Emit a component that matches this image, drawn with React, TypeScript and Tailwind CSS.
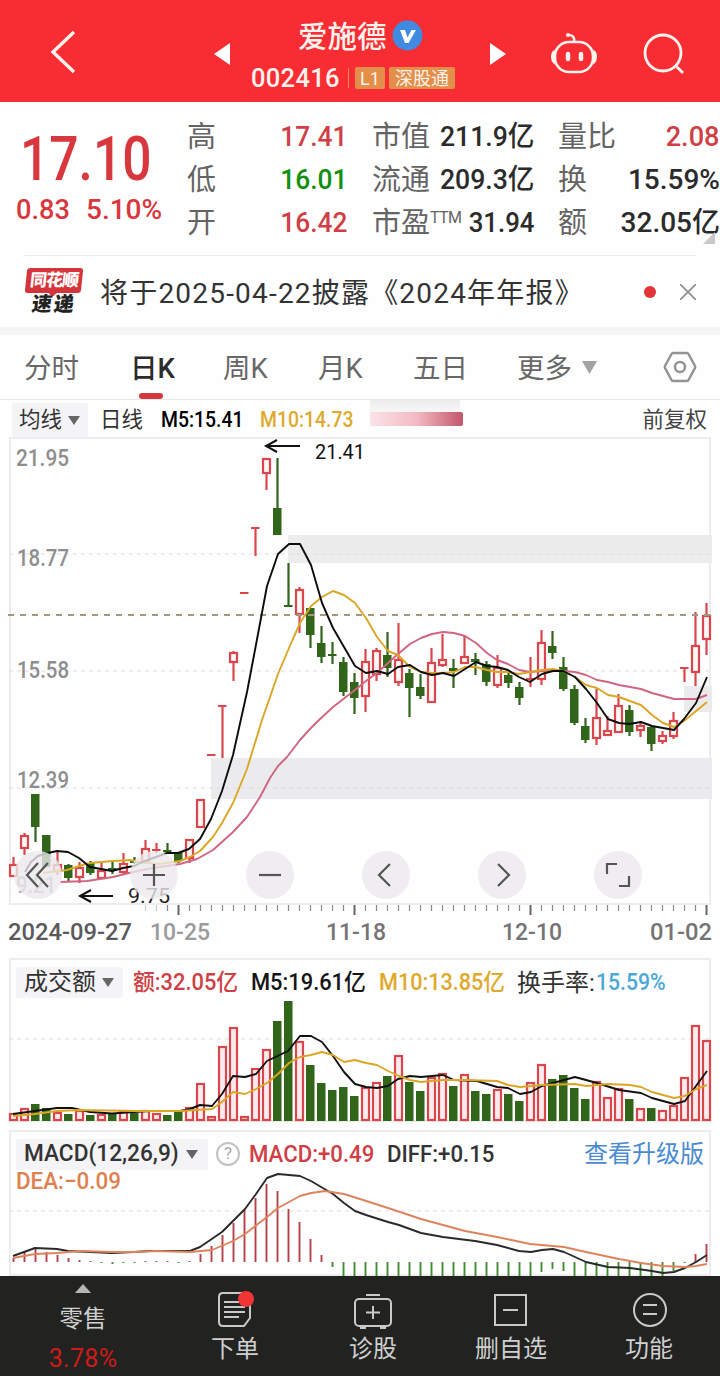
import type { ReactNode } from 'react'

const RED = '#d9474d'
const GREEN = '#30651a'

// kind, high, body top, body bottom, low
type Candle = ['r' | 'g', number, number, number, number]

const CANDLES: Candle[] = [
  ['r', 857, 864, 877, 877],
  ['r', 833, 835, 849, 855],
  ['g', 794, 794, 827, 842],
  ['g', 835, 835, 867, 867],
  ['r', 852, 864, 872, 875],
  ['g', 864, 865, 878, 881],
  ['r', 862, 867, 878, 883],
  ['g', 861, 863, 873, 875],
  ['r', 863, 870, 879, 879],
  ['g', 862, 868, 871, 874],
  ['r', 853, 863, 873, 874],
  ['g', 857, 861, 863, 864],
  ['r', 840, 848, 862, 862],
  ['r', 843, 849, 851, 853],
  ['g', 843, 850, 852, 854],
  ['g', 852, 852, 861, 863],
  ['r', 839, 839, 859, 863],
  ['r', 799, 799, 828, 828],
  ['r', 754, 754, 756, 756],
  ['r', 705, 705, 707, 758],
  ['r', 651, 652, 663, 681],
  ['r', 592, 592, 594, 594],
  ['r', 527, 527, 529, 556],
  ['r', 458, 458, 474, 490],
  ['g', 458, 508, 535, 535],
  ['g', 563, 605, 607, 607],
  ['r', 587, 589, 615, 633],
  ['g', 608, 608, 635, 648],
  ['g', 626, 643, 657, 663],
  ['g', 642, 654, 656, 664],
  ['g', 657, 662, 692, 696],
  ['g', 673, 682, 698, 714],
  ['r', 649, 661, 697, 712],
  ['r', 648, 650, 675, 681],
  ['g', 632, 655, 668, 677],
  ['r', 623, 659, 683, 686],
  ['g', 669, 673, 688, 717],
  ['g', 674, 687, 696, 699],
  ['r', 648, 662, 703, 703],
  ['r', 634, 659, 666, 667],
  ['g', 659, 668, 671, 688],
  ['r', 636, 656, 664, 664],
  ['g', 653, 659, 662, 675],
  ['g', 661, 664, 682, 686],
  ['r', 655, 667, 686, 688],
  ['g', 671, 675, 683, 688],
  ['g', 682, 687, 698, 705],
  ['r', 657, 678, 680, 687],
  ['r', 630, 642, 680, 685],
  ['g', 631, 646, 653, 659],
  ['g', 657, 667, 689, 691],
  ['g', 685, 689, 723, 725],
  ['g', 718, 726, 740, 743],
  ['r', 689, 717, 739, 745],
  ['r', 716, 730, 736, 736],
  ['r', 694, 705, 733, 733],
  ['g', 705, 710, 732, 736],
  ['r', 721, 725, 731, 737],
  ['g', 726, 727, 744, 751],
  ['r', 731, 735, 742, 744],
  ['r', 712, 720, 737, 739],
  ['r', 667, 667, 669, 682],
  ['r', 612, 645, 673, 686],
  ['r', 603, 615, 640, 655],
]

const VOLUME_TOPS = [
  1113, 1108, 1104, 1108, 1112, 1114, 1110, 1115, 1114, 1113, 1110, 1113, 1110, 1113, 1115, 1112,
  1107, 1083, 1116, 1046, 1027, 1116, 1068, 1049, 1021, 1001, 1041, 1065, 1083, 1090, 1087, 1096,
  1087, 1082, 1076, 1055, 1082, 1091, 1077, 1073, 1086, 1074, 1091, 1094, 1089, 1094, 1101, 1082,
  1064, 1079, 1075, 1088, 1099, 1081, 1097, 1088, 1099, 1108, 1108, 1110, 1105, 1077, 1025, 1040,
]

// histogram ends, measured against the zero line
const MACD_ZERO = 1262
const MACD_ENDS = [
  1258, 1252, 1249, 1252, 1255, 1258, 1260, 1261, 1263, 1264, 1263, 1263, 1261, 1261, 1261, 1263,
  1261, 1254, 1246, 1235, 1223, 1210, 1198, 1184, 1191, 1209, 1222, 1239, 1255, 1267, 1278, 1278,
  1278, 1278, 1278, 1278, 1278, 1278, 1278, 1278, 1278, 1278, 1278, 1278, 1278, 1278, 1278, 1278,
  1272, 1269, 1271, 1278, 1278, 1278, 1278, 1278, 1278, 1278, 1278, 1278, 1271, 1263, 1254, 1244,
]

const MA5 =
  '25,872 31,862 38,856 48,853 57,851 68,852 79,858 90,867 101,869 112,871 123,868 134,866 145,861 156,857 167,853 178,853 189,849 200,839 211,819 222,791 233,755 247,692 255,650 267,586 278,554 289,544 300,544 311,565 322,603 333,628 344,647 355,666 366,673 377,671 388,674 398,667 410,665 421,672 432,675 443,673 454,676 465,669 476,662 487,666 497,667 508,670 519,677 530,682 542,674 553,671 563,671 575,677 586,689 597,703 608,719 619,723 629,724 641,722 652,726 663,728 674,730 684,719 696,703 707,677'
const MA10 =
  '43,873 67,870 79,866 90,863 113,861 130,860 145,863 160,864 180,861 190,857 200,851 213,837 222,823 233,803 247,769 262,720 270,697 278,674 289,648 300,623 311,606 322,597 333,591 344,595 355,603 366,618 377,637 388,651 398,655 410,667 421,672 432,673 443,673 454,672 465,667 476,667 487,670 497,672 508,672 519,674 530,672 542,670 553,669 563,671 575,677 586,685 597,688 608,695 619,697 641,705 652,715 663,723 674,727 684,721 707,702'
const MA20 =
  '60,882 87,881 113,877 133,872 153,868 180,864 197,859 213,850 233,832 247,817 260,797 270,778 278,766 287,757 300,740 310,729 319,720 333,707 355,690 366,681 377,673 388,663 398,654 410,644 421,638 432,634 443,632 454,633 465,636 476,643 487,653 497,660 508,664 519,670 530,672 542,671 563,671 575,672 586,675 597,680 608,682 619,685 641,689 652,693 663,696 674,699 696,699 707,695'
const VOL5 =
  '13,1114 35,1111 57,1108 72,1108 90,1112 112,1113.5 134,1112 150,1111 180,1111 190,1109 200,1105 212,1106 222,1094 233,1076 245,1077 256,1074 267,1061 288,1051 300,1036 311,1036 322,1042 333,1056 344,1072 355,1084 366,1087 377,1088 388,1086 398,1079 410,1076 421,1077 443,1075 454,1080 477,1081 497,1087 508,1088 520,1094 531,1092 542,1086 553,1083 575,1077 597,1083 619,1090 641,1093 652,1098 663,1101 674,1104 685,1101 696,1086 707,1071'
const VOL10 =
  '13,1116 35,1114 57,1111 80,1110 134,1111 180,1111 212,1109 222,1102 233,1092 245,1094 256,1089 267,1083 278,1074 289,1063 300,1057 311,1055 322,1052 333,1055 344,1062 355,1060 366,1063 377,1065 388,1071 399,1076 410,1080 421,1082 443,1080 465,1080 497,1081 508,1085 520,1087 542,1085 575,1084 586,1086 608,1084 630,1085 641,1087 652,1092 663,1095 674,1098 685,1096 696,1089 707,1085'
const DIFF =
  '13,1256 35,1248 57,1249 68,1251 112,1253 134,1252 150,1251 180,1251 190,1251 200,1247 222,1232 233,1221 245,1209 256,1194 267,1178 278,1174 300,1176 311,1181 333,1194 344,1203 355,1211 366,1215 388,1222 399,1225 421,1233 443,1237 475,1241 486,1243 497,1245 519,1251 531,1252 542,1250 553,1249 564,1252 586,1262 608,1267 630,1268 652,1271 663,1273 674,1272 685,1268 696,1262 707,1255'
const DEA =
  '13,1258 35,1254 57,1253 80,1251 112,1252 134,1252 156,1251 190,1252 212,1250 233,1241 245,1234 267,1217 278,1208 289,1202 300,1196 311,1193 325,1191 344,1194 360,1199 388,1208 421,1219 465,1231 497,1237 530,1244 564,1247 586,1252 619,1259 641,1263 663,1266 685,1267 696,1266 707,1264'

const cx = (i: number) => 13.5 + i * 11

function Line({ points, color }: { points: string; color: string }) {
  return <polyline points={points} fill="none" stroke={color} strokeWidth={1.9} strokeLinejoin="round" />
}

function Grid({ y }: { y: number }) {
  return <path d={`M9 ${y}H710`} stroke="#dedde0" strokeWidth={1.2} strokeDasharray="4 4" />
}

function Label({ x, y, w, size, color, weight = 500, children }: {
  x: number
  y: number
  w: number
  size: number
  color: string
  weight?: number
  children: string
}) {
  return (
    <text x={x} y={y} textLength={w} lengthAdjust="spacingAndGlyphs" fontSize={size} fontWeight={weight} fill={color}>
      {children}
    </text>
  )
}

function Candlestick({ candle, i }: { candle: Candle; i: number }) {
  const [kind, high, top, bottom, low] = candle
  const x = cx(i)
  const color = kind === 'r' ? RED : GREEN
  const flat = bottom - top <= 3
  return (
    <g>
      {high < top && <path d={`M${x} ${high}V${top}`} stroke={color} strokeWidth={2.2} />}
      {low > bottom && <path d={`M${x} ${bottom}V${low}`} stroke={color} strokeWidth={2.2} />}
      {kind === 'r' && !flat ? (
        <rect x={x - 3.5} y={top + 1} width={7} height={bottom - top - 2} fill="#fff6f6" stroke={color} strokeWidth={2.2} />
      ) : (
        <rect x={x - 4.5} y={top} width={8.5} height={bottom - top} fill={color} />
      )}
    </g>
  )
}

function PriceChart() {
  return (
    <svg width="702" height="521" viewBox="9 437 702 521" className="relative block overflow-visible font-['Roboto',sans-serif]">
      <rect x={288} y={535} width={424} height={28} fill="#ececec" />
      <rect x={211} y={758} width={501} height={41} fill="#ebeaec" />
      <rect x={684} y={686} width={28} height={26} fill="#ebebee" />
      <Grid y={554} />
      <Grid y={671} />
      <Grid y={788} />
      <Label x={16} y={466} w={53} size={24} color="#8e8e8e">21.95</Label>
      <Label x={17} y={566} w={52} size={24} color="#8e8e8e">18.77</Label>
      <Label x={17} y={678} w={52} size={24} color="#8e8e8e">15.58</Label>
      <Label x={17} y={788} w={52} size={24} color="#8e8e8e">12.39</Label>
      <Label x={16} y={893} w={40} size={24} color="#a5a5a5">9.21</Label>
      {CANDLES.map((candle, i) => (
        <Candlestick key={i} candle={candle} i={i} />
      ))}
      <path d="M8 615H711" stroke="#a5977c" strokeWidth={1.8} strokeDasharray="6 6" />
      <Line points={MA20} color="#cf6580" />
      <Line points={MA10} color="#dba624" />
      <Line points={MA5} color="#0c0c0c" />

      <path d="M300 446H267M277 440l-11 6 11 6" fill="none" stroke="#111" strokeWidth={2} />
      <Label x={315} y={459} w={50} size={20} color="#111" weight={400}>21.41</Label>
      <path d="M113 896H80M91 890l-11 6 11 6" fill="none" stroke="#111" strokeWidth={2} />
      <Label x={128} y={903} w={42} size={20} color="#222" weight={400}>9.75</Label>

      {/* one tick per day, a longer one on the labelled days */}
      {CANDLES.map((_, i) =>
        i < 12 ? null : (
          <path
            key={i}
            d={i % 16 === 15 ? `M${cx(i)} 905v10` : `M${cx(i)} 905v6`}
            stroke={i < 14 ? '#cccccc' : i % 16 === 15 ? '#666666' : '#8a8a8a'}
            strokeWidth={i % 16 === 15 ? 2 : 1.2}
          />
        ),
      )}
      <Label x={8} y={940} w={124} size={23} color="#5a5a5c">2024-09-27</Label>
      <Label x={150} y={940} w={60} size={23} color="#9a9a9c">10-25</Label>
      <Label x={326} y={940} w={60} size={23} color="#747476">11-18</Label>
      <Label x={502} y={940} w={60} size={23} color="#747476">12-10</Label>
      <Label x={650} y={940} w={62} size={23} color="#747476">01-02</Label>
    </svg>
  )
}

const CONTROLS = [
  'M33 12 22 24l11 12M43 12 32 24l11 12',
  'M24 13v22M13 24h22',
  'M13 24h22',
  'M28 13 17 24l11 11',
  'M20 13l11 11-11 11',
  'M23 13H13v10M25 35h10V25',
]

function ChartControls() {
  return (
    <div className="absolute top-[414px] left-[5px] flex gap-[68px]">
      {CONTROLS.map((d, i) => (
        <button key={d} className="size-12 rounded-full bg-[#ebe9ec]/80">
          <svg viewBox={i === 0 ? '9 0 48 48' : '0 0 48 48'} className="size-12" fill="none" stroke="#555" strokeWidth={2.2}>
            <path d={d} />
          </svg>
        </button>
      ))}
    </div>
  )
}

function Caret() {
  return (
    <svg width="12" height="9" viewBox="0 0 12 9">
      <path d="M0 0h12L6 9z" fill="#666" />
    </svg>
  )
}

// digits set in a narrower cut than the text around them
function Num({ className = '', children }: { className?: string; children: ReactNode }) {
  return <span className={`inline-block whitespace-nowrap font-medium ${className}`}>{children}</span>
}

function Header() {
  return (
    <header className="flex h-[102px] items-center bg-[#f72d33] text-[#fff3ee]">
      <svg width="28" height="44" viewBox="0 0 28 44" className="mt-[2px] ml-[49px]" fill="none" stroke="currentColor" strokeWidth={3.4}>
        <path d="M25 2 4 22l21 20" />
      </svg>
      <svg width="16" height="24" viewBox="0 0 16 24" className="mt-[6px] ml-[137px]" fill="#fff">
        <path d="M16 1v22L0 12z" />
      </svg>
      <div className="ml-[21px] flex w-[206px] flex-col pt-[10px]">
        <div className="mt-1 flex h-[40px] items-center pb-[4px] pl-[47px] text-[29.500px] font-medium">
          爱施德
          <svg width="31" height="31" viewBox="0 0 31 31" className="mt-[-3px] ml-[5px]">
            <circle cx="15.5" cy="15.5" r="15" fill="#418ae2" />
            <path d="M8 10h5l2.500 7.500 4-7.500h4.500l-7.500 13h-3.500z" fill="#fff" />
          </svg>
        </div>
        <div className="flex h-[38px] items-center">
          <Num className="w-[91px] text-[25.500px] tracking-[.3px]">002416</Num>
          <i className="ml-[6px] h-[20px] w-px bg-[#e99050]" />
          <span className="ml-[6px] flex h-[22px] w-[30px] items-center justify-center rounded-[2px] bg-[#e38e49] text-[18px]">L1</span>
          <span className="ml-1 flex h-[22px] w-[66px] items-center justify-center rounded-[2px] bg-[#e38e49] text-[18px] whitespace-nowrap">深股通</span>
        </div>
      </div>
      <svg width="16" height="24" viewBox="0 0 16 24" className="mt-[6px] ml-[33px]" fill="#fff">
        <path d="M0 1v22l16-11z" />
      </svg>
      <svg width="48" height="44" viewBox="0 0 48 44" className="mt-[4px] ml-[44px]" fill="none" stroke="currentColor" strokeWidth={2.6}>
        <rect x="5" y="11" width="38" height="30" rx="14" />
        <path d="M24 11c1-4-1-7-5-7" />
        <circle cx="18" cy="4" r="2" fill="currentColor" stroke="none" />
        <path d="M4 20c-3 2-3 9 0 12zM44 20c3 2 3 9 0 12z" fill="currentColor" strokeWidth={1.500} />
        <path d="M18 23v5M31 23v5" strokeWidth={4.500} strokeLinecap="round" />
      </svg>
      <svg width="44" height="44" viewBox="0 0 44 44" className="mt-[4px] ml-[44px]" fill="none" stroke="currentColor" strokeWidth={2.8}>
        <circle cx="21" cy="22" r="18" />
        <path d="M33 34l8 8" />
      </svg>
    </header>
  )
}

function Quote() {
  return (
    <section className="relative flex h-[153px] text-[28px] text-[#646464]">
      <div className="w-[187px] text-[#d8383d]">
        <Num className="mt-[20px] ml-[20px] origin-left scale-x-[.845] text-[61px] leading-[74px]">17.10</Num>
        <div className="-mt-[1px] flex leading-[30px]">
          <Num className="ml-[16px] w-[70px] origin-left scale-x-[.97] text-[28px]">0.83</Num>
          <Num className="origin-left scale-x-[1] text-[28px]">5.10%</Num>
        </div>
      </div>
      <div className="mt-[13px] w-[160px] leading-[43px]">
        <QuoteRow label="高"><Num className="origin-right scale-x-[.94] text-[#cf3f45]">17.41</Num></QuoteRow>
        <QuoteRow label="低"><Num className="origin-right scale-x-[.94] text-[#11900f]">16.01</Num></QuoteRow>
        <QuoteRow label="开"><Num className="origin-right scale-x-[.94] text-[#cf3f45]">16.42</Num></QuoteRow>
      </div>
      <div className="mt-[13px] ml-[25px] w-[162px] leading-[43px] text-[#2b2b2b]">
        <QuoteRow label="市值"><Num className="origin-right scale-x-[.95]">211.9亿</Num></QuoteRow>
        <QuoteRow label="流通"><Num className="origin-right scale-x-[.95]">209.3亿</Num></QuoteRow>
        <QuoteRow label="市盈" sup="TTM"><Num className="origin-right scale-x-[.92]">31.94</Num></QuoteRow>
      </div>
      <div className="mt-[13px] ml-[24px] w-[162px] leading-[43px] text-[#2b2b2b]">
        <QuoteRow label="量比"><Num className="origin-right scale-x-[.97] text-[#cf3f45]">2.08</Num></QuoteRow>
        <QuoteRow label="换"><Num className="origin-right">15.59%</Num></QuoteRow>
        <QuoteRow label="额"><Num className="origin-right">32.05亿</Num></QuoteRow>
      </div>
      <svg width="12" height="12" viewBox="0 0 12 12" className="absolute right-[5px] bottom-[11px]">
        <path d="M12 0v12H0z" fill="#c9c9cb" />
      </svg>
    </section>
  )
}

function QuoteRow({ label, sup, children }: { label: string; sup?: string; children: ReactNode }) {
  return (
    <div className="flex h-[43px] justify-between whitespace-nowrap">
      <span className="flex pt-px text-[29px] text-[#646464]">
        {label}
        {sup && <span className="-mt-[6px] w-[30px] text-[16px] tracking-[-0.6px]">{sup}</span>}
      </span>
      {children}
    </div>
  )
}

function Notice() {
  return (
    <section className="mx-6 flex h-[72px] items-center border-t border-[#ebebeb] text-[#333]">
      <div className="flex w-[60px] flex-col items-center">
        <div className="relative flex h-[25px] w-[56px] -skew-x-6 items-center justify-center rounded-[3px] bg-[#d5343b] text-[17px] font-black tracking-[-1px] whitespace-nowrap text-white">
          同花顺
          <svg width="10" height="5" viewBox="0 0 10 5" className="absolute -bottom-[4px] left-[23px]">
            <path d="M0 0h10L5 5z" fill="#d5343b" />
          </svg>
        </div>
        <span className="-skew-x-8 text-[20px] leading-[23px] font-black tracking-[2px] text-[#222]">速递</span>
      </div>
      <span className="mt-[4px] ml-[16px] w-[500px] text-[28px] tracking-[1.200px] whitespace-nowrap">将于2025-04-22披露《2024年年报》</span>
      <i className="ml-[44px] size-3 shrink-0 rounded-full bg-[#e53437]" />
      <svg width="16" height="16" viewBox="0 0 16 16" className="ml-[24px] shrink-0" stroke="#8f8f8f" strokeWidth={1.800}>
        <path d="M0 0l16 16M16 0L0 16" />
      </svg>
    </section>
  )
}

function Tabs() {
  return (
    <nav className="flex h-[65px] items-center border-b border-[#e8e8e8] pl-6 text-[27.500px] whitespace-nowrap text-[#686868]">
      <span className="mt-[4px] w-[106px]">分时</span>
      <span className="relative mt-[4px] w-[93px] font-medium text-[#2c2c2c]">
        日K
        <i className="absolute -bottom-[9px] left-[9px] h-[6px] w-[24px] rounded-full bg-[#d3383d]" />
      </span>
      <span className="mt-[4px] w-[95px]">周K</span>
      <span className="mt-[4px] w-[95px]">月K</span>
      <span className="mt-[4px] w-[104px]">五日</span>
      <span className="mt-[4px] w-[65px]">更多</span>
      <svg width="15" height="13" viewBox="0 0 15 13">
        <path d="M0 0h15L7.500 13z" fill="#a2a2a2" />
      </svg>
      <svg width="34" height="32" viewBox="0 0 34 32" className="ml-[66px]" fill="none" stroke="#949494" strokeWidth={2.500} strokeLinejoin="round">
        <path d="M10 2h14q1 0 1.500 1l6.500 12q.500 1 0 2l-6.500 12q-.500 1-1.500 1H10q-1 0-1.500-1L2 17q-.500-1 0-2L8.500 3q.500-1 1.500-1z" />
        <circle cx="17" cy="16" r="5" />
      </svg>
    </nav>
  )
}

function AverageBar() {
  return (
    <div className="flex h-[37px] items-center pl-3 text-[21.500px] whitespace-nowrap text-[#333]">
      <div className="mt-[3px] flex h-[34px] w-[76px] items-center gap-[6px] rounded-[3px] bg-[#f4f3f6] pl-[7px]">
        均线 <Caret />
      </div>
      <span className="mt-[3px] ml-[12px] w-[61px]">日线</span>
      <Num className="mt-[4px] w-[99px] origin-left scale-x-[.9] text-black">M5:15.41</Num>
      <Num className="mt-[4px] w-[110px] origin-left scale-x-[.9] text-[#dfa92c]">M10:14.73</Num>
      <div className="flex h-full w-[93px] flex-col">
        <div className="h-[12px] w-[90px] bg-linear-to-b from-[#ececec] to-[#f7f7f7]" />
        <div className="h-[14px] rounded-r-[2px] bg-linear-to-r from-[#fae3e8] via-[#f3bac4] to-[#c2556c]" />
      </div>
      <span className="mt-[3px] ml-auto pr-[13px] text-[#444]">前复权</span>
    </div>
  )
}

function VolumePanel() {
  return (
    <section className="mx-[9px] mb-[8px] h-[164px] shadow-[inset_0_0_0_2px_#ededef]">
      <div className="flex h-[42px] items-center pt-[6px] pl-[7px] text-[23px] whitespace-nowrap">
        <div className="flex h-[31px] w-[107px] items-center gap-[6px] rounded-[3px] bg-[#f4f3f6] pl-[8px] text-[24px] text-[#333]">
          成交额 <Caret />
        </div>
        <Num className="mt-[2px] ml-[10px] w-[118px] origin-left scale-x-[.95] text-[#cf3f45]">额:32.05亿</Num>
        <Num className="mt-[2px] w-[128px] origin-left scale-x-[.95] text-[#151515]">M5:19.61亿</Num>
        <Num className="mt-[2px] w-[138px] origin-left scale-x-[.94] text-[#dfa92c]">M10:13.85亿</Num>
        <span className="mt-[2px] w-[79px] text-[24px] text-[#333]">换手率:</span>
        <Num className="mt-[2px] origin-left scale-x-[.92] text-[#4ba9d8]">15.59%</Num>
      </div>
      <svg width="702" height="122" viewBox="9 1000 702 122" className="block overflow-visible">
        <Grid y={1039} />
        {VOLUME_TOPS.map((top, i) =>
          CANDLES[i][0] === 'r' ? (
            <rect key={i} x={cx(i) - 3.5} y={top + 1} width={7} height={1119 - top} fill="#fdecef" stroke={RED} strokeWidth={2.2} />
          ) : (
            <rect key={i} x={cx(i) - 4.5} y={top} width={8.500} height={1121 - top} fill={GREEN} />
          ),
        )}
        <Line points={VOL5} color="#111" />
        <Line points={VOL10} color="#dba624" />
      </svg>
    </section>
  )
}

function MacdPanel() {
  return (
    <section className="mx-[9px] h-[146px] overflow-hidden shadow-[inset_0_0_0_2px_#ededef]">
      <div className="flex h-[40px] items-center pt-[8px] pl-[7px] text-[23px] whitespace-nowrap text-[#333]">
        <div className="flex h-[31px] w-[192px] items-center rounded-[3px] bg-[#f4f3f6] pl-[8px]">
          <Num className="w-[162px] origin-left scale-x-[.985]">MACD(12,26,9)</Num>
          <Caret />
        </div>
        <span className="ml-[8px] flex size-[24px] items-center justify-center rounded-full border-2 border-[#c2c2c2] text-[17px] text-[#aaa]">?</span>
        <Num className="mt-[2px] ml-[9px] w-[138px] origin-left scale-x-[.965] text-[#cf3f45]">MACD:+0.49</Num>
        <Num className="mt-[2px] origin-left scale-x-[.965]">DIFF:+0.15</Num>
        <span className="ml-auto pr-[7px] text-[24px] text-[#4a8bd0]">查看升级版</span>
      </div>
      <svg width="702" height="106" viewBox="9 1170 702 106" className="block overflow-visible font-['Roboto',sans-serif]">
        <Grid y={1211} />
        <Label x={16} y={1189} w={105} size={23} color="#dd8150">DEA:−0.09</Label>
        {MACD_ENDS.map((end, i) => (
          <path key={i} d={`M${cx(i)} ${MACD_ZERO}V${end}`} stroke={end < MACD_ZERO ? '#b5414a' : '#448c33'} strokeWidth={1.900} />
        ))}
        <Line points={DIFF} color="#2a2a2a" />
        <Line points={DEA} color="#dd845c" />
      </svg>
    </section>
  )
}

function NavItem({ label, children }: { label: string; children: ReactNode }) {
  return (
    <div className="flex w-[138px] flex-col items-center">
      <svg width="40" height="40" viewBox="0 0 40 40" className="mt-[14px]" fill="none" stroke="#c9c9c9" strokeWidth={2}>
        {children}
      </svg>
      <span className="mt-[2px] text-[24px] leading-[34px]">{label}</span>
    </div>
  )
}

function BottomNav() {
  return (
    <footer className="flex h-[100px] bg-[#222321] text-[#cfcfcf]">
      <div className="flex w-[166px] flex-col items-center">
        <svg width="18" height="10" viewBox="0 0 18 10" className="mt-[8px]">
          <path d="M9 0l9 10H0z" fill="#b5b5b5" />
        </svg>
        <span className="mt-[9px] text-[23.500px] leading-[34px]">零售</span>
        <span className="mt-[6px] text-[25px] leading-[34px] tracking-[.3px] text-[#cf1a1a]">3.78%</span>
      </div>
      <NavItem label="下单">
        <path d="M8 3h22q5 0 5 5v20l-6 8H8q-4 0-4-4V7q0-4 4-4z" />
        <path d="M9 12h15M9 17h21M9 22h21M9 27h15" />
        <circle cx="31" cy="9" r="8" fill="#f03535" stroke="none" />
      </NavItem>
      <NavItem label="诊股">
        <rect x="2" y="9" width="36" height="27" rx="4" />
        <path d="M13 5h14M20 16v13M13 22.500h14M7 38h6M27 38h6" />
      </NavItem>
      <NavItem label="删自选">
        <path d="M4 5h31v30H4zM12 20h15" />
      </NavItem>
      <NavItem label="功能">
        <circle cx="21" cy="20" r="16" />
        <path d="M14 15h14M14 24h14" />
      </NavItem>
    </footer>
  )
}

export default function App() {
  return (
    <main className="w-[720px] bg-[#fefefe] font-['Roboto','Noto_Sans_CJK_SC',sans-serif]">
      <Header />
      <Quote />
      <Notice />
      <div className="h-[8px] bg-[#f5f5f6]" />
      <Tabs />
      <AverageBar />
      <section className="relative mx-[9px] h-[521px]">
        <div className="absolute inset-x-0 top-0 h-[468px] shadow-[inset_0_0_0_2px_#ededef]" />
        <PriceChart />
        <ChartControls />
      </section>
      <VolumePanel />
      <MacdPanel />
      <BottomNav />
    </main>
  )
}
